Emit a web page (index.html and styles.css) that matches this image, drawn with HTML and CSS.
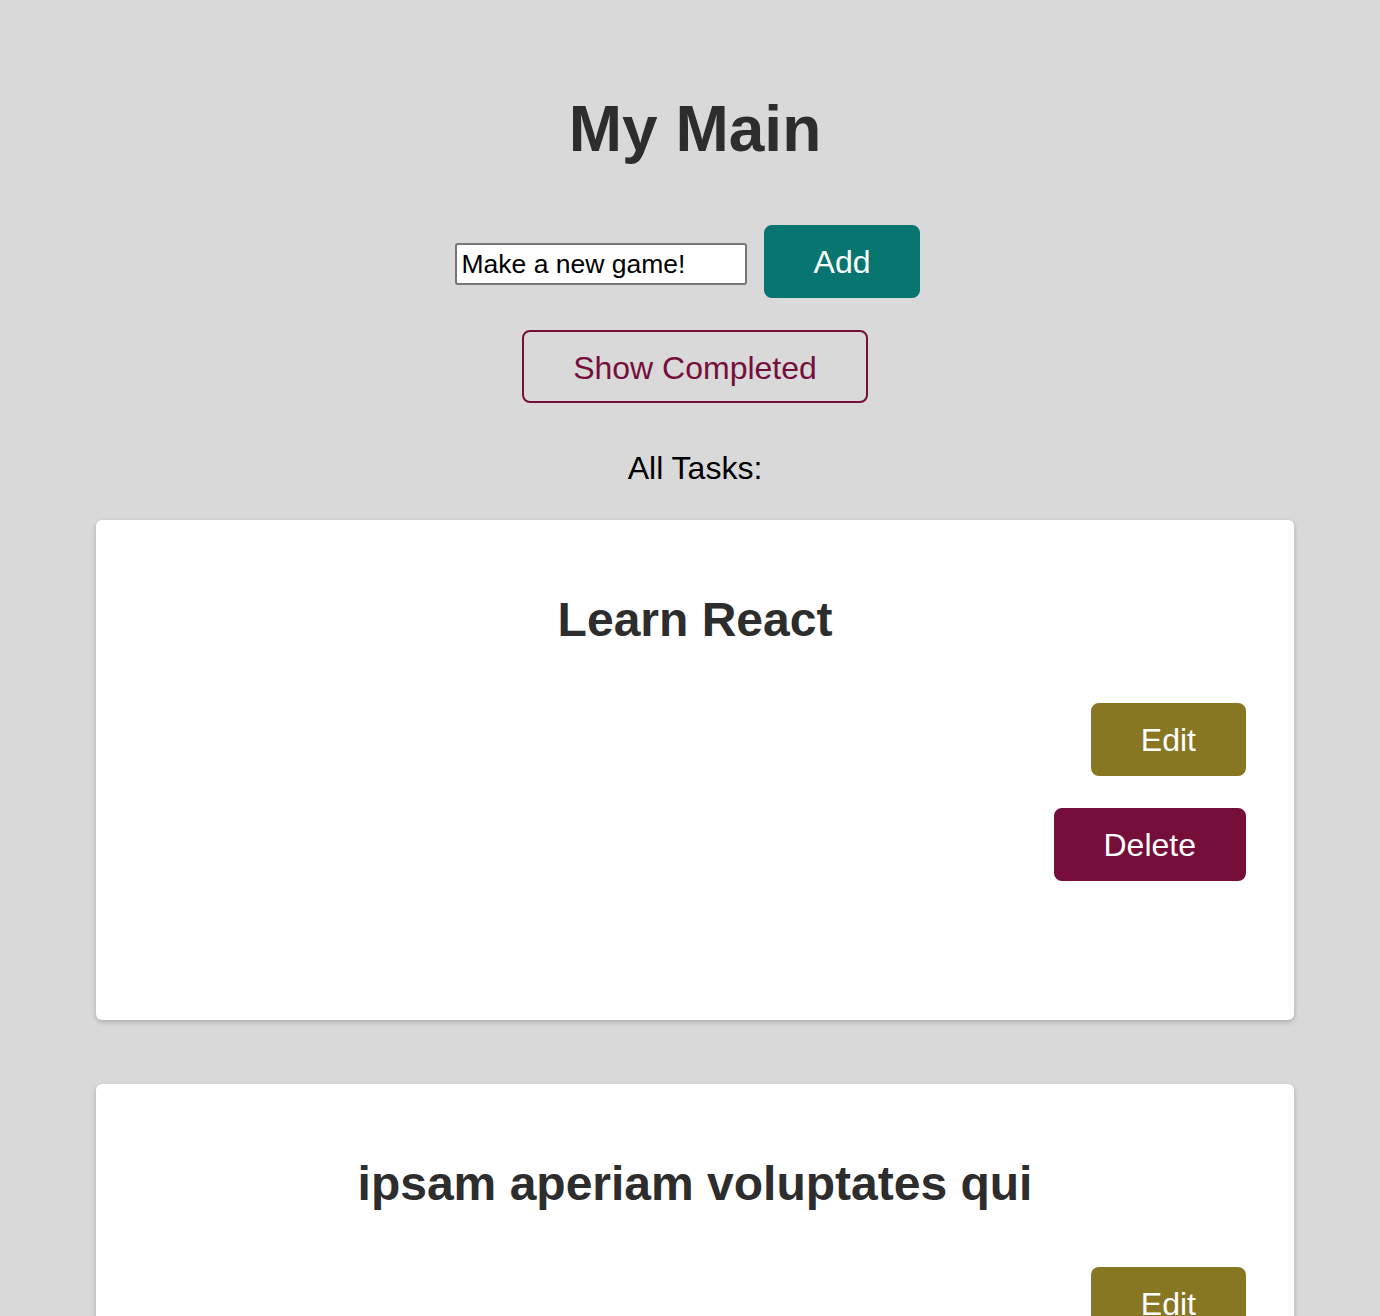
FILE: index.html
```
<!DOCTYPE html>
<html>
<head>
<meta charset="utf-8">
<title>My Main</title>
<link rel="stylesheet" href="styles.css">
</head>
<body>
<div class="page">
  <h1 class="title">My Main</h1>
  <div class="add-row">
    <input class="task-input" type="text" value="Make a new game!">
    <button class="btn btn-add">Add</button>
  </div>
  <div class="toggle-row">
    <button class="btn btn-outline">Show Completed</button>
  </div>
  <p class="list-label">All Tasks:</p>
  <div class="cards">
    <div class="card">
      <h2 class="card-title">Learn React</h2>
      <div class="card-actions">
        <button class="btn btn-edit">Edit</button>
        <button class="btn btn-delete">Delete</button>
      </div>
    </div>
    <div class="card">
      <h2 class="card-title">ipsam aperiam voluptates qui</h2>
      <div class="card-actions">
        <button class="btn btn-edit">Edit</button>
        <button class="btn btn-delete">Delete</button>
      </div>
    </div>
  </div>
</div>
</body>
</html>
```
FILE: styles.css
```
html, body {
  margin: 0;
  padding: 0;
  background: #d9d9d9;
}
body {
  font-family: "Liberation Sans", Arial, Helvetica, sans-serif;
  overflow: hidden;
}
.page {
  padding: 92px 0 0 10px;
  display: flex;
  flex-direction: column;
  align-items: center;
}
.title {
  margin: 0;
  font-size: 64px;
  line-height: 74px;
  font-weight: 700;
  color: #2d2d2d;
}
.add-row {
  margin-top: 59px;
  display: flex;
  align-items: center;
  justify-content: center;
  gap: 17px;
}
.task-input {
  box-sizing: border-box;
  width: 292px;
  height: 42px;
  margin-top: 5px;
  padding: 2px 5px;
  border: 2px solid #767676;
  border-radius: 3px;
  background: #fff;
  font-family: "Liberation Sans", Arial, sans-serif;
  font-size: 26.5px;
  color: #000;
}
.btn {
  font-family: "Liberation Sans", Arial, sans-serif;
  font-size: 32px;
  line-height: 37px;
  padding: 17px 48px 15px;
  border: 2px solid transparent;
  border-radius: 8px;
  cursor: pointer;
  color: #fff;
}
.btn-add {
  background: #087570;
  border-color: #087570;
  margin-right: 15px;
}
.toggle-row {
  margin-top: 32px;
}
.btn-outline {
  background: transparent;
  border-color: #760e3a;
  color: #760e3a;
  padding: 18px 49px 14px;
}
.list-label {
  margin: 47px 0 0;
  font-size: 32px;
  line-height: 37px;
  color: #000;
}
.cards {
  margin-top: 33px;
  display: flex;
  flex-direction: column;
  gap: 64px;
}
.card {
  box-sizing: border-box;
  width: 1198px;
  height: 500px;
  background: #fff;
  border-radius: 6px;
  box-shadow: 0 2px 5px rgba(0, 0, 0, 0.22);
  padding: 72px 48px 48px;
}
.card-title {
  margin: 0;
  text-align: center;
  font-size: 48px;
  line-height: 55px;
  font-weight: 700;
  color: #2d2d2d;
}
.card-actions {
  margin-top: 56px;
  display: flex;
  flex-direction: column;
  align-items: flex-end;
  gap: 32px;
}
.btn-edit {
  background: #877622;
  border-color: #877622;
}
.btn-delete {
  background: #760e3a;
  border-color: #760e3a;
}
```
